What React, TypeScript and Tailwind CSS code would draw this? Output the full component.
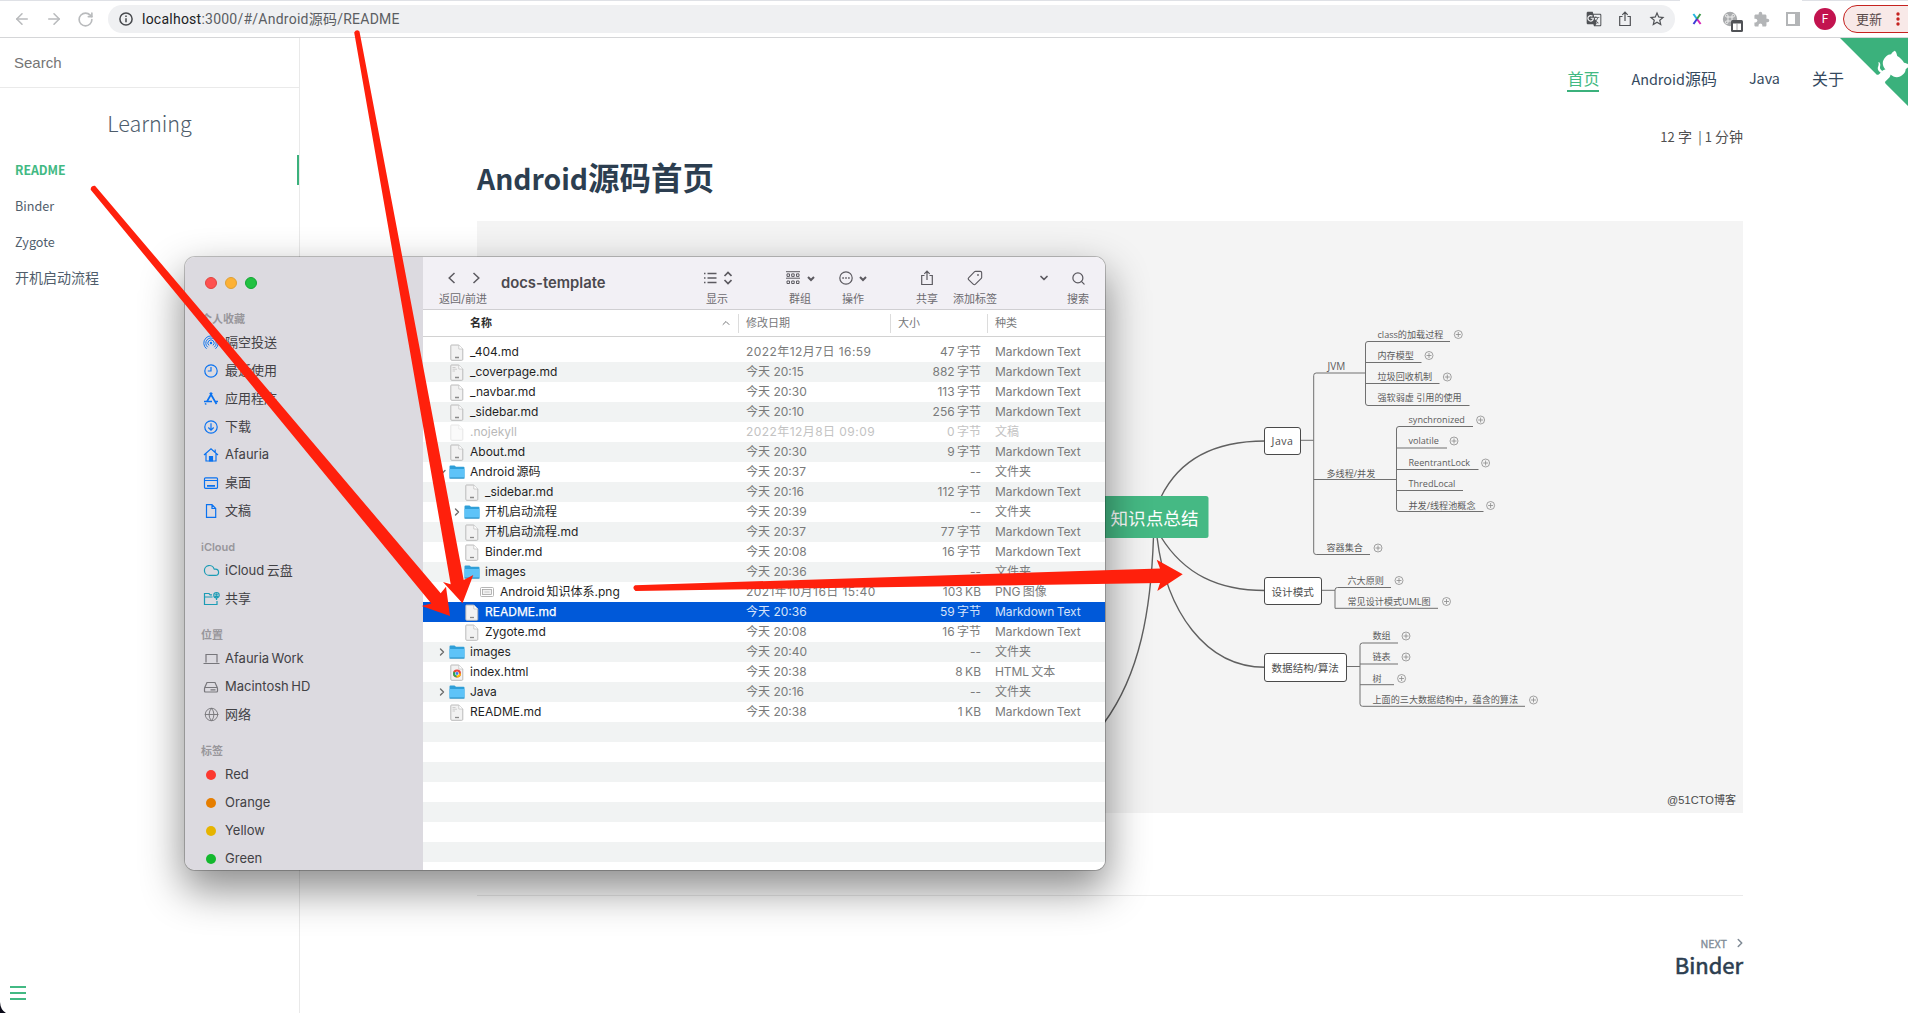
import React from "react";
import { ArrowLeft, ArrowRight, RotateCw, ChevronDown, ChevronRight, ChevronUp, Cloud, Globe, Search, Tag } from "lucide-react";
import { MdGTranslate, MdExtension, MdStarBorder } from "react-icons/md";

const CJK = "font-['Noto_Sans_CJK_SC',sans-serif]";
const UI = "font-['Inter','Noto_Sans_CJK_SC',sans-serif]";

function ShareIcon({ className = "" }: { className?: string }) {
  return (
    <svg viewBox="0 0 14 16" className={className} fill="none" stroke="currentColor" strokeWidth="1.2">
      <path d="M4.5 5.5H1.7v9h10.6v-9H9.5M7 10V1.3M4.3 3.8 7 1.1l2.7 2.7" />
    </svg>
  );
}

function BrowserBar() {
  return (
    <header className="flex h-[38px] shrink-0 flex-col border-b border-b-[#d5d6d8] bg-white">
      <div className="flex h-px shrink-0">
        <span className="w-[1680px] bg-[#dfe1e6]" />
        <span className="w-[122px]" />
        <span className="flex-1 bg-[#dfe1e6]" />
      </div>
      <div className="flex items-start">
        <div className="flex h-[36px] w-[108px] shrink-0 items-center gap-[14px] pl-[13px] text-[#b9bbbd]">
          <ArrowLeft size={18} strokeWidth={2.1} />
          <ArrowRight size={18} strokeWidth={2.1} />
          <RotateCw size={17} strokeWidth={2.3} />
        </div>
        <div className="mt-1 flex h-7 w-[1567px] shrink-0 items-center rounded-full bg-[#eff0f2] pr-[9px] pl-[11px]">
          <svg viewBox="0 0 14 14" className="h-[14px] w-[14px]" fill="none" stroke="#47494d" strokeWidth="1.5">
            <circle cx="7" cy="7" r="6.1" />
            <path d="M7 6.2v4M7 3.4v1.5" />
          </svg>
          <span className="ml-[9px] font-[Roboto,'Noto_Sans_CJK_SC',sans-serif] text-[14px] leading-7 tracking-[0.24px] text-[#5b5e63]">
            <span className="text-[#202124]">localhost</span>:3000/#/Android源码/README
          </span>
          <div className="ml-auto flex items-center gap-[15px] text-[#505256]">
            <MdGTranslate size={16} />
            <ShareIcon className="mx-px h-[16px] w-[14px]" />
            <MdStarBorder size={18} />
          </div>
        </div>
        <div className="flex h-[36px] items-center pl-[15px]">
          <svg viewBox="0 0 14 14" className="h-[14px] w-[14px]" fill="none" strokeWidth="2">
            <path d="M3.4 2 7 7" stroke="#25b5dd" />
            <path d="M7 7l3.6 5" stroke="#d727b5" />
            <path d="M10.4 2 7 7" stroke="#3f9a4a" />
            <path d="M7 7l-3.5 5" stroke="#3b3bd6" />
          </svg>
          <svg viewBox="0 0 22 22" className="mt-[6px] ml-[18px] h-[22px] w-[22px]">
            <circle cx="8" cy="8" r="7.2" fill="#a9abad" />
            <path d="M6 6h4v4H6zM6 6H4.8A1.3 1.3 0 1 1 6 4.8zM10 6V4.8A1.3 1.3 0 1 1 11.2 6zM10 10h1.2A1.3 1.3 0 1 1 10 11.2zM6 10v1.2A1.3 1.3 0 1 1 4.8 10z" fill="none" stroke="#eee" />
            <rect x="9" y="9" width="12" height="12" rx="1.5" fill="#505256" />
            <path d="M11 12.500h8v6.500h-8z" fill="#fff" />
            <path d="M15 12.500v6.500" stroke="#8a8c8e" strokeWidth=".8" />
          </svg>
          <MdExtension size={17} className="ml-[9px] text-[#b3b5b7]" />
          <svg viewBox="0 0 14 14" className="ml-[16px] h-[14px] w-[14px]"><path d="M0 0h14v14H0zM2 2v10h7V2z" fill="#b3b5b7" fillRule="evenodd" /></svg>
          <span className="ml-[14px] flex h-[22px] w-[22px] items-center justify-center rounded-full bg-[#c2134f] font-[Roboto,sans-serif] text-[12px] text-white">F</span>
          <div className="ml-[7px] flex h-7 w-[80px] shrink-0 items-center rounded-full border border-[#c5221f] bg-[#f8e9e8] pl-[12px] text-[#5a4b4b]">
            <span className="font-['Noto_Sans_CJK_SC',sans-serif] text-[13px] leading-6">更新</span>
            <svg viewBox="0 0 4 14" className="ml-[14px] h-[14px] w-1" fill="#c5221f"><circle cx="2" cy="2" r="1.7" /><circle cx="2" cy="7" r="1.7" /><circle cx="2" cy="12" r="1.7" /></svg>
          </div>
        </div>
      </div>
    </header>
  );
}

function DocsSidebar() {
  return (
    <aside className={`flex w-[300px] shrink-0 flex-col border-r border-[#e9e9e9] ${CJK}`}>
      <div className="flex h-[50px] items-center border-b border-[#eaeaea] pt-px pl-[14px] font-['Liberation_Sans',sans-serif] text-[15px] text-[#757575]">Search</div>
      <h1 className="mt-[17px] text-center text-[21.6px] leading-9 font-light text-[#4d5c6b]">Learning</h1>
      <ul className="mt-[14px] text-[12.6px] text-[#505d6b]">
        <li className="mb-[6px] h-[30px] border-r-2 border-[#3bb17c] pl-[15px] text-[12.3px] leading-[30px] font-semibold text-[#42b983]">README</li>
        <li className="mb-[6px] h-[30px] pl-[15px] leading-[30px]">Binder</li>
        <li className="mb-[6px] h-[30px] pl-[15px] leading-[30px]">Zygote</li>
        <li className="h-[30px] pl-[15px] text-[14px] leading-[28px]">开机启动流程</li>
      </ul>
      <div className="mt-auto mb-[13px] ml-[10px] flex w-4 flex-col gap-1">
        <span className="h-[2px] bg-[#42b983]" />
        <span className="h-[2px] bg-[#42b983]" />
        <span className="h-[2px] bg-[#42b983]" />
      </div>
    </aside>
  );
}

const leaves: [number, number, string, number?][] = [
  [1377.5, 334.5, "class的加载过程", 1458.3],
  [1377.5, 355.5, "内存模型", 1429],
  [1377.5, 377, "垃圾回收机制", 1447.3],
  [1377.5, 398, "强软弱虚 引用的使用"],
  [1408.5, 420, "synchronized", 1480.6],
  [1408.5, 441, "volatile", 1454],
  [1408.5, 463, "ReentrantLock", 1485.6],
  [1408.5, 484, "ThredLocal"],
  [1408.5, 505.5, "并发/线程池概念", 1490.6],
  [1326.5, 548, "容器集合", 1378],
  [1347.5, 580.5, "六大原则", 1399],
  [1347.5, 601.5, "常见设计模式UML图", 1446.5],
  [1372.5, 636, "数组", 1406],
  [1372.5, 657, "链表", 1406],
  [1372.5, 678.5, "树", 1401.6],
  [1372.5, 700, "上面的三大数据结构中，蕴含的算法", 1533.5],
];

function MindMap() {
  return (
    <svg viewBox="477 221 1266 592" className="block h-[592px] w-[1266px] bg-[#f4f4f4] font-['Open_Sans','Noto_Sans_CJK_SC',sans-serif]">
      <g fill="none" stroke="#606060" strokeWidth="1.4">
        <path d="M1161 497C1178 462 1210 441 1265 441" />
        <path d="M1161 537C1184 574 1218 590.5 1265 590.5" />
        <path d="M1157 537C1166 612 1206 667.3 1265 667.3" />
        <path d="M1153.5 537C1151 610 1140 674 1104 723" />
      </g>
      <g fill="none" stroke="#707070" strokeWidth="1">
        <path d="M1300 440.3H1313.700M1365.500 373H1316.200Q1313.700 373 1313.700 375.500V552Q1313.700 554.500 1316.200 554.500H1370M1313.700 479.500H1396.500" />
        <path d="M1450 341.5H1368Q1365.500 341.500 1365.500 344V403Q1365.500 405.500 1368 405.500H1469.500M1365.500 362.500H1421.500M1365.500 383.500H1439.500" />
        <path d="M1473 426.5H1399Q1396.500 426.500 1396.500 429V509Q1396.500 511.500 1399 511.500H1483.500M1396.500 448H1447M1396.500 469.500H1478.500M1396.500 490.500H1463" />
        <path d="M1321 590.3H1335M1391 587.500H1337.500Q1335 587.500 1335 590V608.300H1438" />
        <path d="M1346 666.5H1360M1398 643H1362.500Q1360 643 1360 645.500V703.800Q1360 706.300 1362.500 706.300H1525M1360 664H1398M1360 684.700H1394" />
      </g>
      <g fill="#fff" stroke="#4a4a4a" strokeWidth="1">
        <rect x="1264.5" y="427.5" width="36" height="27" rx="2.5" />
        <rect x="1264.5" y="577.5" width="57" height="27" rx="2.5" />
        <rect x="1264.5" y="653.5" width="82" height="28" rx="2.5" />
      </g>
      <rect x="1010" y="496" width="198.5" height="42" rx="2.5" fill="#45b984" />
      <text x="1198.5" y="524.5" textAnchor="end" fontSize="17.6" fill="#fff">知识点总结</text>
      <g fill="#4e4e4e" fontSize="10.6">
        <text x="1271.5" y="445" textLength="21.5">Java</text>
        <text x="1271.5" y="595.5">设计模式</text>
        <text x="1271.5" y="672">数据结构/算法</text>
      </g>
      <g fill="#5c5c5c" fontSize="9.1">
        <text x="1327.5" y="370" fontSize="10">JVM</text>
        <text x="1326.5" y="476.8">多线程/并发</text>
        {leaves.map(([x, y, t]) => <text key={t} x={x} y={y + 3.4}>{t}</text>)}
      </g>
      <g fill="none" stroke="#8a8a8a" strokeWidth="0.8">
        {leaves.map(([, y, t, cx]) => cx ? (
          <g key={t}>
            <circle cx={cx} cy={y} r="4" />
            <path d={`M${cx - 2.5} ${y}h5M${cx} ${y - 2.5}v5`} />
          </g>
        ) : null)}
      </g>
      <text x="1667" y="804" fontSize="11" fill="#4a4a4a" textLength="69" className="font-['Liberation_Sans','Noto_Sans_CJK_SC',sans-serif]">@51CTO博客</text>
    </svg>
  );
}

function GithubCorner() {
  return (
    <svg viewBox="0 0 250 250" className="absolute top-0 left-[1540px] h-20 w-20" fill="#3bb17c">
      <path d="M0,0 L115,115 L130,115 L142,142 L250,250 L250,0 Z" />
      <path fill="#fff" d="M128.3,109.0 C113.8,99.7 119.0,89.6 119.0,89.6 C122.0,82.7 120.5,78.6 120.5,78.6 C119.2,72.0 123.4,76.3 123.4,76.3 C127.3,80.9 125.5,87.3 125.5,87.3 C122.9,97.6 130.6,101.9 134.4,103.2" />
      <path fill="#fff" d="M115.0,115.0 C114.9,115.1 118.7,116.5 119.8,115.4 L133.7,101.6 C136.9,99.2 139.9,98.4 142.2,98.6 C133.8,88.0 127.5,74.4 143.8,58.0 C148.5,53.4 154.0,51.2 159.7,51.0 C160.3,49.4 163.2,43.6 171.4,40.1 C171.4,40.1 176.1,42.5 178.8,56.2 C183.1,58.6 187.2,61.8 190.9,65.4 C194.5,69.0 197.7,73.2 200.1,77.6 C213.8,80.2 216.3,84.9 216.3,84.9 C212.7,93.1 206.9,96.0 205.4,96.6 C205.1,102.4 203.0,107.8 198.3,112.5 C181.9,128.9 168.3,122.5 157.7,114.1 C157.9,116.9 156.7,120.9 152.7,124.9 L141.0,136.5 C139.8,137.7 141.6,141.9 141.8,141.8 Z" />
    </svg>
  );
}

function DocsPage() {
  return (
    <main className={`relative flex-1 overflow-hidden text-[#34495e] ${CJK}`}>
      <GithubCorner />
      <nav className="flex h-[56px] justify-end gap-[32px] pt-[27px] pr-[64px] text-[16px] leading-[26px]">
        <a className="h-[27px] border-b-2 border-[#3bb17c] text-[#42b983]">首页</a>
        <a><span className="text-[14.4px]">Android</span>源码</a>
        <a className="text-[14.4px]">Java</a>
        <a>关于</a>
      </nav>
      <article className="ml-[177px] w-[1266px]">
        <p className="mt-[30px] h-6 text-right text-[14px] leading-6 whitespace-pre text-[#505050]"><span className="text-[13px]">12</span> 字  <span className="text-[13px]">| 1</span> 分钟</p>
        <h1 className="mt-[4px] h-12 text-[31.5px] leading-[48px] font-semibold text-[#2c3e50]"><span className="text-[28.3px]">Android</span>源码首页</h1>
        <div className="mt-[21px]"><MindMap /></div>
        <div className="mt-[82px] border-t border-[#eaeaea]" />
        <div className="mt-[37px] flex flex-col items-end">
          <div className="flex h-5 items-center gap-[6px] text-[10.8px] leading-5 text-[#808b96] [-webkit-text-stroke:0.3px_#808b96]">NEXT <ChevronRight size={14} strokeWidth={2.6} className="-mr-1" /></div>
          <div className="-mt-0.5 text-[22px] leading-[26px] text-[#2c3e50] [-webkit-text-stroke:0.6px_#2c3e50]">Binder</div>
        </div>
      </article>
    </main>
  );
}

function DocIcon({ kind = "plain" }: { kind?: string }) {
  if (kind === "folder")
    return (
      <svg viewBox="0 0 16 14" className="h-[14px] w-[16px]">
        <path d="M.5 1.5Q.5.5 1.5.5H5.500L7 1.800H14.500Q15.500 1.800 15.500 2.800V12.500Q15.500 13.500 14.500 13.500H1.500Q.5 13.500.5 12.500Z" fill="#2f9fd8" />
        <path d="M.5 4H15.500V12.500H.5Z" fill="#5ec3f8" />
        <path d="M.5 13.200H15.500" stroke="#3a93c4" strokeWidth=".8" />
      </svg>
    );
  if (kind === "image")
    return (
      <svg viewBox="0 0 14 10" className="h-[10px] w-[14px]" fill="#fff" stroke="#b5b5b5">
        <rect x=".5" y=".5" width="13" height="9" rx="1" />
        <rect x="2.5" y="2.5" width="9" height="5" fill="#f1f1f1" stroke="#999" strokeWidth=".7" />
        <path d="M4.500 5h5" strokeWidth=".7" />
      </svg>
    );
  return (
    <svg viewBox="0 0 14 17" className={kind === "faded" ? "h-[17px] w-[14px] opacity-35" : "h-[17px] w-[14px]"}>
      <path d="M1.500 1H8.800L12.800 5V15.300Q12.800 16.300 11.800 16.300H1.800Q.8 16.300.8 15.300V1.700Q.8 1 1.500 1Z" fill="#f2f2f2" stroke="#b4b4b4" strokeWidth=".9" />
      <path d="M8.800 1V5H12.800" fill="#fff" stroke="#c4c4c4" strokeWidth=".8" />
      {kind === "chrome" ? (
        <g>
          <circle cx="7" cy="9.5" r="4" fill="#e8453c" />
          <path d="M7 9.500 3.600 7.500A4 4 0 0 0 6.600 13.500Z" fill="#2da94f" />
          <path d="M7 9.500H11A4 4 0 0 1 6.600 13.500Z" fill="#fdbd00" />
          <circle cx="7" cy="9.5" r="1.9" fill="#fff" />
          <circle cx="7" cy="9.5" r="1.4" fill="#3b7ded" />
        </g>
      ) : kind === "faded" ? null : (
        <path d="M5 13.500H9" stroke="#8b8b8b" strokeWidth="1.3" />
      )}
      {kind === "lined" && <path d="M2.500 3.500H5.500M2.500 5.200H7M2.500 7H5" stroke="#bdbdbd" strokeWidth=".7" />}
    </svg>
  );
}

type Row = { n: string; d: string; s: string; k: string; l?: number; i?: string; a?: "r" | "d"; sel?: boolean; dim?: boolean };
const MD = "Markdown Text";
const rows: Row[] = [
  { n: "_404.md", d: "2022年12月7日 16:59", s: "47 字节", k: MD },
  { n: "_coverpage.md", d: "今天 20:15", s: "882 字节", k: MD, i: "lined" },
  { n: "_navbar.md", d: "今天 20:30", s: "113 字节", k: MD },
  { n: "_sidebar.md", d: "今天 20:10", s: "256 字节", k: MD },
  { n: ".nojekyll", d: "2022年12月8日 09:09", s: "0 字节", k: "文稿", i: "faded", dim: true },
  { n: "About.md", d: "今天 20:30", s: "9 字节", k: MD },
  { n: "Android 源码", d: "今天 20:37", s: "--", k: "文件夹", i: "folder", a: "d" },
  { n: "_sidebar.md", d: "今天 20:16", s: "112 字节", k: MD, l: 1 },
  { n: "开机启动流程", d: "今天 20:39", s: "--", k: "文件夹", l: 1, i: "folder", a: "r" },
  { n: "开机启动流程.md", d: "今天 20:37", s: "77 字节", k: MD, l: 1 },
  { n: "Binder.md", d: "今天 20:08", s: "16 字节", k: MD, l: 1 },
  { n: "images", d: "今天 20:36", s: "--", k: "文件夹", l: 1, i: "folder", a: "d" },
  { n: "Android 知识体系.png", d: "2021年10月16日 15:40", s: "103 KB", k: "PNG 图像", l: 2, i: "image" },
  { n: "README.md", d: "今天 20:36", s: "59 字节", k: MD, l: 1, sel: true },
  { n: "Zygote.md", d: "今天 20:08", s: "16 字节", k: MD, l: 1 },
  { n: "images", d: "今天 20:40", s: "--", k: "文件夹", i: "folder", a: "r" },
  { n: "index.html", d: "今天 20:38", s: "8 KB", k: "HTML 文本", i: "chrome" },
  { n: "Java", d: "今天 20:16", s: "--", k: "文件夹", i: "folder", a: "r" },
  { n: "README.md", d: "今天 20:38", s: "1 KB", k: MD, i: "lined" },
];

function FileRow({ r, odd }: { r: Row; odd: boolean }) {
  const bg = r.sel ? "bg-[#0059d9]" : odd ? "bg-[#f1f3f3]" : "bg-white";
  const name = r.sel ? "text-white [-webkit-text-stroke:0.25px_white]" : r.dim ? "text-[#b9b9b9]" : "text-[#1f1f1f]";
  const meta = r.sel ? "text-[#d5e3fa]" : r.dim ? "text-[#c3c3c3]" : "text-[#7a7b7b]";
  const indent = r.l === 2 ? "pl-[42px]" : r.l === 1 ? "pl-[27px]" : "pl-[12px]";
  const dateSpacing = r.d.length > 10 ? "tracking-[0.44px]" : "";
  return (
    <div className={`flex h-5 items-center text-[12px] leading-5 whitespace-pre ${bg}`}>
      <div className={`flex w-[323px] items-center [word-spacing:-1.3px] ${indent} ${name}`}>
        <span className="flex w-[13px] shrink-0 justify-center text-[#6c6c6c]">
          {r.a === "r" && <ChevronRight size={12} strokeWidth={2.8} />}
          {r.a === "d" && <ChevronDown size={12} strokeWidth={2.8} />}
        </span>
        <span className="mr-[5px] flex w-[17px] shrink-0 items-center justify-center"><DocIcon kind={r.i} /></span>
        {r.n}
      </div>
      <span className={`w-[150px] ${dateSpacing} ${meta}`}>{r.d}</span>
      <span className={`w-[85px] text-right [word-spacing:-1px] ${meta}`}>{r.s}</span>
      <span className={`ml-[14px] tracking-[-0.06px] [word-spacing:-1px] ${meta}`}>{r.k}</span>
    </div>
  );
}

function SideIcon({ name }: { name: string }) {
  const p = { className: "h-4 w-4", viewBox: "0 0 16 16", fill: "none", stroke: "#0a72f0", strokeWidth: 1.2 } as const;
  switch (name) {
    case "airdrop":
      return <svg {...p}><circle cx="8" cy="8" r="1.2" fill="#0a72f0" stroke="none" /><path d="M6 10.400A3.100 3.100 0 1 1 10 10.400M4.700 12.200A5.200 5.200 0 1 1 11.300 12.200M3.600 13.800A7.200 7.200 0 1 1 12.400 13.800" strokeWidth=".95" /></svg>;
    case "recent":
      return <svg {...p}><circle cx="8" cy="8" r="6.2" /><path d="M8 4V8H4.800" /></svg>;
    case "apps":
      return <svg {...p} strokeWidth={1.7}><path d="M9 1.800 3.800 10.800M7 1.800 13.500 13M1 10.500H9M11.500 10.500H15M2.900 12.400 2.300 13.500" /></svg>;
    case "down":
      return <svg {...p}><circle cx="8" cy="8" r="6.2" /><path d="M8 4.300V11M5.300 8.500 8 11.200 10.700 8.500" /></svg>;
    case "home":
      return <svg {...p}><path d="M1 8 8 1.700 15 8M3 6.500V14H13V6.500M12.200 5V2.500" /><path d="M6.500 14V9.500H9.500V14Z" fill="#0a72f0" /></svg>;
    case "desktop":
      return <svg {...p}><rect x="1.5" y="2.8" width="13" height="10.5" rx="1" /><path d="M1.500 5.500H14.500" /><path d="M4 10.900H12" strokeWidth="1.8" /></svg>;
    case "doc":
      return <svg {...p}><path d="M3.500 1.700H9L12.700 5.500V14.300H3.500ZM9 1.700V5.500H12.700" /></svg>;
    case "cloud":
      return <Cloud size={17} strokeWidth={1.7} className="text-[#1b9cb5]" />;
    case "shared":
      return <svg {...p} stroke="#1b9cb5" className="h-4 w-[17px] overflow-visible"><path d="M8.500 3.800H6.700L5.500 2.500H1V13.500H13.500V10M1 6H9" /><circle cx="13" cy="4.2" r="2.7" /><circle cx="13" cy="3.5" r=".7" /><path d="M11.500 6Q13 4.500 14.500 6M13 7V9" /></svg>;
    case "laptop":
      return <svg {...p} stroke="#77767b" className="h-4 w-[17px]"><path d="M2.500 11.500V3.500H13.500V11.500M0 12.500H16" /></svg>;
    case "disk":
      return <svg {...p} stroke="#77767b"><path d="M1.500 9 4 3.500H12L14.500 9M2.500 8.500H13.500Q14.500 8.500 14.500 9.500V12Q14.500 13 13.500 13H2.500Q1.500 13 1.500 12V9.500Q1.500 8.500 2.500 8.500ZM7.500 10.800H12.500" /></svg>;
    case "net":
      return <Globe size={15} strokeWidth={1.5} className="text-[#77767b]" />;
    case "red":
      return <span className="h-[10px] w-[10px] rounded-full bg-[#fc3930]" />;
    case "orange":
      return <span className="h-[10px] w-[10px] rounded-full bg-[#e67e00]" />;
    case "yellow":
      return <span className="h-[10px] w-[10px] rounded-full bg-[#e6b400]" />;
    default:
      return <span className="h-[10px] w-[10px] rounded-full bg-[#14b82e]" />;
  }
}

const sections: { t: string; items: [string, string][] }[] = [
  { t: "个人收藏", items: [["airdrop", "隔空投送"], ["recent", "最近使用"], ["apps", "应用程序"], ["down", "下载"], ["home", "Afauria"], ["desktop", "桌面"], ["doc", "文稿"]] },
  { t: "iCloud", items: [["cloud", "iCloud 云盘"], ["shared", "共享"]] },
  { t: "位置", items: [["laptop", "Afauria Work"], ["disk", "Macintosh HD"], ["net", "网络"]] },
  { t: "标签", items: [["red", "Red"], ["orange", "Orange"], ["yellow", "Yellow"], ["green", "Green"]] },
];

function Tool({ label, className, children }: { label?: string; className: string; children?: React.ReactNode }) {
  return (
    <div className={`flex shrink-0 flex-col items-center ${className}`}>
      <div className="flex h-5 items-center justify-center">{children}</div>
      {label && <span className="mt-[3px] text-[11px] leading-4 whitespace-nowrap text-[#6d6b70]">{label}</span>}
    </div>
  );
}

function Finder() {
  return (
    <section className={`absolute top-[257px] left-[185px] flex h-[613px] w-[920px] overflow-hidden rounded-[10px] shadow-[0_0_0_1px_rgba(0,0,0,0.22),0_18px_42px_2px_rgba(0,0,0,0.45)] ${UI}`}>
      <div className="w-[238px] shrink-0 bg-[#dcdae0] pt-[20px] pl-4">
        <div className="flex gap-2 pl-1">
          <span className="h-3 w-3 rounded-full border border-[#e0443e] bg-[#fe5150]" />
          <span className="h-3 w-3 rounded-full border border-[#dea035] bg-[#fdb135]" />
          <span className="h-3 w-3 rounded-full border border-[#12a534] bg-[#22c142]" />
        </div>
        <div className="mt-[21px]">
          {sections.map((s) => (
            <div key={s.t} className="mb-[14px]">
              <div className="h-[18px] text-[11px] leading-[18px] font-semibold text-[#98969b]">{s.t}</div>
              {s.items.map(([icon, label]) => (
                <div key={label} className="flex h-7 items-center pt-px text-[13px] [word-spacing:-1.2px] text-[#424145]">
                  <span className="mr-[4px] flex w-5 shrink-0 justify-center"><SideIcon name={icon} /></span>
                  {label}
                </div>
              ))}
            </div>
          ))}
        </div>
      </div>
      <div className="flex flex-1 flex-col bg-white">
        <div className="flex h-[53px] shrink-0 items-start border-b border-[#d0cfd2] bg-[#f2f0f5] pt-[11px] text-[#5c5a60]">
          <Tool label="返回/前进" className="ml-[12px] w-[56px]">
            <svg viewBox="0 0 32 12" className="ml-0.5 h-3 w-8" fill="none" stroke="currentColor" strokeWidth="1.5"><path d="M6.500 1 1.200 6 6.500 11M25.500 1 30.800 6 25.500 11" /></svg>
          </Tool>
          <span className="mt-[5px] ml-[10px] w-[105px] shrink-0 text-[14.8px] leading-5 font-semibold whitespace-nowrap text-[#4b494e]">docs-template</span>
          <Tool label="显示" className="ml-[93px] w-[36px]">
            <svg viewBox="0 0 28 14" className="ml-0.5 h-[14px] w-7" fill="none" stroke="currentColor" strokeWidth="1.3"><path d="M0 2.500H1.500M3.500 2.500H12.500M0 7H1.500M3.500 7H12.500M0 11.500H1.500M3.500 11.500H12.500" /><path d="M20.500 5 24 1.500 27.500 5M20.500 9 24 12.500 27.500 9" strokeWidth="1.7" /></svg>
          </Tool>
          <Tool label="群组" className="ml-[45px] w-[40px]">
            <svg viewBox="0 0 30 14" className="ml-0.5 h-[14px] w-[30px]" fill="none" stroke="currentColor"><path d="M0 .7H14M0 7.200H14" /><path d="M1 2.900H3.500V5.400H1ZM5.700 2.900H8.200V5.400H5.700ZM10.500 2.900H13V5.400H10.500ZM1 10H3.500V12.500H1ZM5.700 10H8.200V12.500H5.700ZM10.500 10H13V12.500H10.500Z" /><path d="M22 6 25 9 28 6" strokeWidth="2" /></svg>
          </Tool>
          <Tool label="操作" className="ml-[13px] w-[40px]">
            <svg viewBox="0 0 30 14" className="h-[14px] w-[30px]" fill="none" stroke="currentColor" strokeWidth="1.2"><circle cx="8" cy="7" r="6.2" /><path d="M4.300 7H5.900M7.200 7H8.800M10.100 7H11.700" strokeWidth="1.6" /><path d="M22 6 25 9 28 6" strokeWidth="2" /></svg>
          </Tool>
          <Tool label="共享" className="ml-[34px] w-[40px]"><ShareIcon className="-mt-px h-[16px] w-[14px]" /></Tool>
          <Tool label="添加标签" className="ml-[4px] w-[48px]"><Tag size={16} strokeWidth={1.7} className="rotate-90" /></Tool>
          <Tool className="ml-[35px] w-[20px]"><ChevronDown size={12} strokeWidth={3.5} /></Tool>
          <Tool label="搜索" className="ml-[4px] w-[40px]"><Search size={15} strokeWidth={2} /></Tool>
        </div>
        <div className="flex h-[27px] shrink-0 items-center border-b border-[#d2d2d2] text-[11px] text-[#77787a]">
          <span className="ml-[47px] w-[250px] font-bold text-[#2c2c2c]">名称</span>
          <ChevronUp size={12} strokeWidth={2} />
          <span className="ml-[6px] flex h-[19px] w-[152px] items-center border-l border-[#dcdcdc] pl-[7px]">修改日期</span>
          <span className="flex h-[19px] w-[97px] items-center border-l border-[#dcdcdc] pl-[7px]">大小</span>
          <span className="flex h-[19px] items-center border-l border-[#dcdcdc] pl-[7px]">种类</span>
        </div>
        <div className="pt-[5px]">
          {rows.map((r, i) => <FileRow key={i} r={r} odd={i % 2 === 1} />)}
          {Array.from({ length: 7 }, (_, i) => <div key={i} className={i % 2 === 0 ? "h-5 bg-[#f1f3f3]" : "h-5 bg-white"} />)}
        </div>
      </div>
    </section>
  );
}

function Arrows() {
  return (
    <svg viewBox="0 0 1908 1013" className="pointer-events-none absolute top-0 left-0 h-[1013px] w-[1908px]" fill="#ff200c">
      <path d="M90.700 189.800Q90.500 185.500 95 185.700L440.700 593.300 446 586.700 450 616 421.700 606 431.300 603.500Z" />
      <path d="M354.200 32.500Q356.500 28.500 359.500 31.500L463.700 580 473.300 575 462.500 603.300 443 582 450.700 584.300Z" />
      <path d="M635 585.200 1160 568.500 1156.700 559.800 1182.700 574.300 1157.300 591 1160 583 635.500 591Q631.500 588 635 585.200Z" />
    </svg>
  );
}

export default function App() {
  return (
    <div className="relative flex h-[1013px] w-[1908px] flex-col overflow-hidden bg-white">
      <BrowserBar />
      <div className="flex min-h-0 flex-1">
        <DocsSidebar />
        <DocsPage />
      </div>
      <Finder />
      <Arrows />
      <svg viewBox="0 0 6 11" className="absolute bottom-0 left-0 h-[11px] w-[6px]"><path d="M0 0Q.5 8 6 11H0Z" fill="#0b0a18" /></svg>
    </div>
  );
}
